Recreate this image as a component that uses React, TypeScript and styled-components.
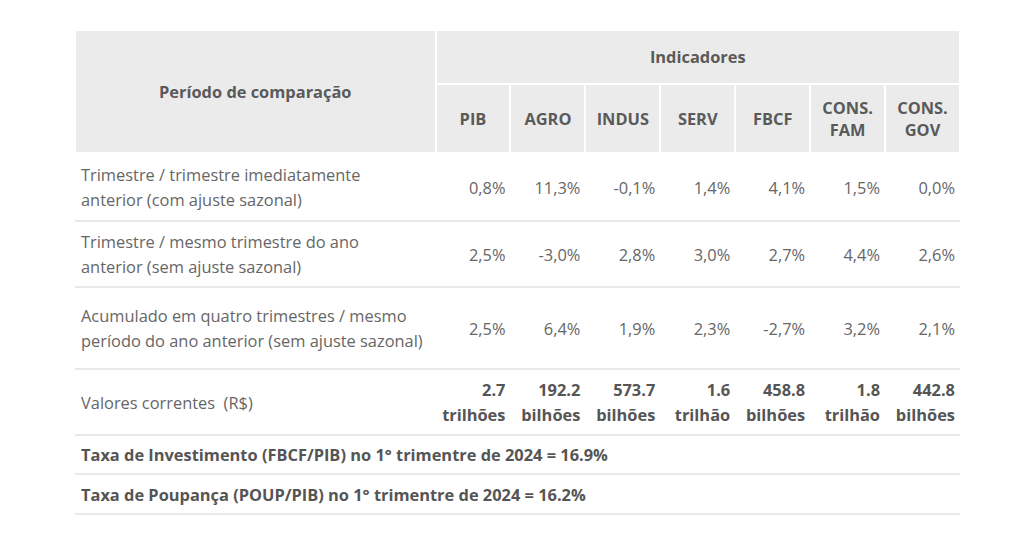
import React from "react";
import styled, { createGlobalStyle } from "styled-components";

const Global = createGlobalStyle`
  html, body { margin: 0; padding: 0; background: #fff; }
  body { font-family: "Open Sans", "Liberation Sans", sans-serif; }
`;

const Page = styled.div`
  padding: 29px 0 0 74px;
`;

const Table = styled.table`
  width: 887px;
  border-collapse: collapse;
  font-size: 16.4px;
  color: #666;
`;

const Th = styled.th<{ $h?: number }>`
  background: #ebebeb;
  border: 2px solid #fff;
  font-weight: 700;
  color: #5a5a5a;
  text-align: center;
  vertical-align: middle;
  line-height: 22px;
  padding: 0 4px;
  height: ${(p) => (p.$h ? `${p.$h}px` : "auto")};
`;

const Tr = styled.tr<{ $h: number }>`
  height: ${(p) => p.$h}px;
  border-bottom: 2px solid #e9e9e9;
`;

const Label = styled.td`
  padding: 0 6px 0 6px;
  line-height: 25px;
  text-align: left;
  vertical-align: middle;
`;

const Num = styled.td<{ $bold?: boolean }>`
  padding: 0 5px 0 0;
  line-height: 25px;
  text-align: right;
  vertical-align: middle;
  white-space: nowrap;
  font-weight: ${(p) => (p.$bold ? 700 : 400)};
  color: ${(p) => (p.$bold ? "#555" : "#666")};
`;

const Note = styled.td`
  padding: 0 6px;
  line-height: 25px;
  font-weight: 700;
  color: #555;
  text-align: left;
`;

const cols = ["PIB", "AGRO", "INDUS", "SERV", "FBCF", "CONS.\nFAM", "CONS.\nGOV"];

const rows: { label: string[]; vals: string[]; h: number }[] = [
  {
    label: ["Trimestre / trimestre imediatamente", "anterior (com ajuste sazonal)"],
    vals: ["0,8%", "11,3%", "-0,1%", "1,4%", "4,1%", "1,5%", "0,0%"],
    h: 68,
  },
  {
    label: ["Trimestre / mesmo trimestre do ano", "anterior (sem ajuste sazonal)"],
    vals: ["2,5%", "-3,0%", "2,8%", "3,0%", "2,7%", "4,4%", "2,6%"],
    h: 66,
  },
  {
    label: ["Acumulado em quatro trimestres / mesmo", "período do ano anterior (sem ajuste sazonal)"],
    vals: ["2,5%", "6,4%", "1,9%", "2,3%", "-2,7%", "3,2%", "2,1%"],
    h: 82,
  },
];

const valores = [
  ["2.7", "trilhões"],
  ["192.2", "bilhões"],
  ["573.7", "bilhões"],
  ["1.6", "trilhão"],
  ["458.8", "bilhões"],
  ["1.8", "trilhão"],
  ["442.8", "bilhões"],
];

export default function App() {
  return (
    <Page>
      <Global />
      <Table>
        <colgroup>
          <col style={{ width: 362 }} />
          {cols.map((c) => (
            <col key={c} style={{ width: 75 }} />
          ))}
        </colgroup>
        <thead>
          <tr>
            <Th rowSpan={2}>Período de comparação</Th>
            <Th colSpan={7} $h={52}>Indicadores</Th>
          </tr>
          <tr>
            {cols.map((c) => (
              <Th key={c} $h={67}>
                {c.split("\n").map((p, i) => (
                  <React.Fragment key={i}>
                    {i > 0 && <br />}
                    {p}
                  </React.Fragment>
                ))}
              </Th>
            ))}
          </tr>
        </thead>
        <tbody>
          {rows.map((r) => (
            <Tr key={r.label[0]} $h={r.h}>
              <Label>
                {r.label[0]}
                <br />
                {r.label[1]}
              </Label>
              {r.vals.map((v, i) => (
                <Num key={i}>{v}</Num>
              ))}
            </Tr>
          ))}
          <Tr $h={66}>
            <Label>Valores correntes&nbsp; (R$)</Label>
            {valores.map(([a, b], i) => (
              <Num key={i} $bold>
                {a}
                <br />
                {b}
              </Num>
            ))}
          </Tr>
          <Tr $h={39}>
            <Note colSpan={8}>Taxa de Investimento (FBCF/PIB) no 1° trimentre de 2024 = 16.9%</Note>
          </Tr>
          <Tr $h={40}>
            <Note colSpan={8}>Taxa de Poupança (POUP/PIB) no 1° trimentre de 2024 = 16.2%</Note>
          </Tr>
        </tbody>
      </Table>
    </Page>
  );
}
